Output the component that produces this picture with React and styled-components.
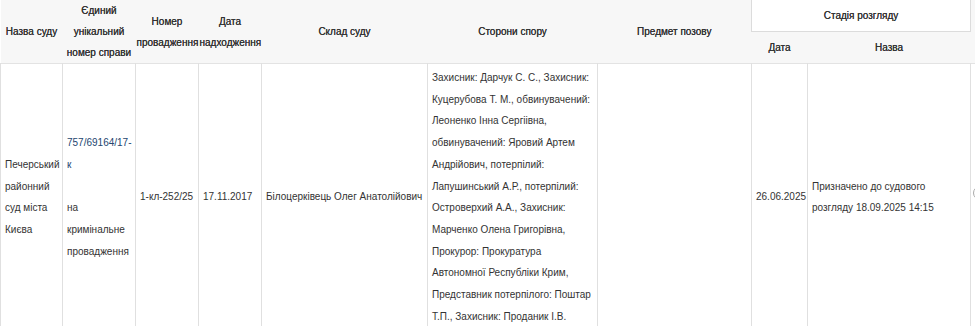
import React from "react";
import styled, { createGlobalStyle } from "styled-components";

const GlobalStyle = createGlobalStyle`
  html, body {
    margin: 0;
    padding: 0;
    background: #fff;
    overflow: hidden;
  }
  body {
    font-family: "Liberation Sans", Arial, sans-serif;
    color: #333;
  }
`;

const Wrapper = styled.div`
  width: 975px;
  height: 326px;
  overflow: hidden;
`;

const Table = styled.table`
  border-collapse: collapse;
  table-layout: fixed;
  width: 1010px;
  font-size: 10px;
  line-height: 21.7px;
`;

const Head = styled.thead`
  background: #f7f7f7;
  border-bottom: 1px solid #e3e3e3;
`;

const HeadRow = styled.tr`
  height: 31px;
`;

const Th = styled.th`
  font-weight: normal;
  text-shadow: 0 0 0.2px #333;
  text-align: center;
  vertical-align: middle;
  padding: 0 ${(p) => (p.$tight ? 1 : 4)}px;
  line-height: 21px;
  color: #333;
  background: ${(p) => (p.$boxed ? "#fff" : "transparent")};
  border: ${(p) => (p.$boxed ? "1px solid #dcdcdc" : "none")};
  border-top: none;
`;

const Td = styled.td`
  text-align: left;
  vertical-align: middle;
  padding: 3px 4px;
  border-left: 1px solid #e0e0e0;
  border-right: 1px solid #e0e0e0;
  color: #333;
`;

const CaseLink = styled.a`
  color: #24466f;
  text-decoration: none;
  cursor: pointer;
`;

const InfoIcon = styled.span`
  display: inline-block;
  width: 12px;
  height: 12px;
  margin-left: -2px;
  border: 1px solid #aaa;
  border-radius: 50%;
`;

const columns = [62, 73, 63, 63, 166, 170, 154, 56, 163, 40];

export default function App() {
  return (
    <>
      <GlobalStyle />
      <Wrapper>
        <Table>
          <colgroup>
            {columns.map((w, i) => (
              <col key={i} style={{ width: w }} />
            ))}
          </colgroup>
          <Head>
            <HeadRow>
              <Th rowSpan={2}>Назва суду</Th>
              <Th rowSpan={2}>Єдиний унікальний номер справи</Th>
              <Th rowSpan={2} $tight>Номер провадження</Th>
              <Th rowSpan={2} $tight>Дата надходження</Th>
              <Th rowSpan={2}>Склад суду</Th>
              <Th rowSpan={2}>Сторони спору</Th>
              <Th rowSpan={2}>Предмет позову</Th>
              <Th colSpan={2} $boxed>Стадія розгляду</Th>
              <Th rowSpan={2}></Th>
            </HeadRow>
            <HeadRow>
              <Th>Дата</Th>
              <Th>Назва</Th>
            </HeadRow>
          </Head>
          <tbody>
            <tr>
              <Td>Печерський районний суд міста Києва</Td>
              <Td>
                <CaseLink>757/69164/17-к</CaseLink>
                <br />
                <br />
                на кримінальне провадження
              </Td>
              <Td>1-кл-252/25</Td>
              <Td>17.11.2017</Td>
              <Td>Білоцерківець Олег Анатолійович</Td>
              <Td>
                Захисник: Дарчук С. С., Захисник: Куцерубова Т. М., обвинувачений:
                Леоненко Інна Сергіівна, обвинувачений: Яровий Артем Андрійович,
                потерпілий: Лапушинський А.Р., потерпілий: Островерхий А.А.,
                Захисник: Марченко Олена Григорівна, Прокурор: Прокуратура
                Автономної Республіки Крим, Представник потерпілого: Поштар Т.П.,
                Захисник: Проданик І.В.
              </Td>
              <Td></Td>
              <Td>26.06.2025</Td>
              <Td>Призначено до судового розгляду 18.09.2025 14:15</Td>
              <Td>
                <InfoIcon />
              </Td>
            </tr>
          </tbody>
        </Table>
      </Wrapper>
    </>
  );
}
